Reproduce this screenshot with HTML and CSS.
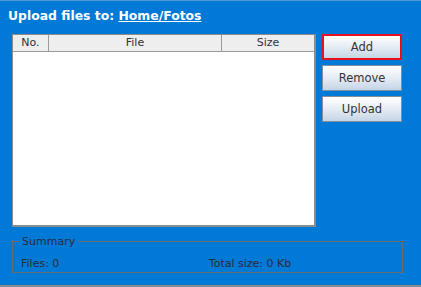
FILE: index.html
```html
<!DOCTYPE html>
<html lang="en">
<head>
    <meta charset="UTF-8">
    <title>Upload files</title>
    <link rel="stylesheet" href="styles.css">
</head>
<body>
    <div class="panel">
        <h1 class="title">Upload files to: <a href="#">Home/Fotos</a></h1>

        <div class="main">
            <div class="file-table">
                <div class="head">
                    <div class="col col-no">No.</div>
                    <div class="col col-file">File</div>
                    <div class="col col-size">Size</div>
                </div>
                <div class="rows"></div>
            </div>

            <div class="buttons">
                <button class="btn btn-focus">Add</button>
                <button class="btn">Remove</button>
                <button class="btn">Upload</button>
            </div>
        </div>

        <div class="summary">
            <span class="legend">Summary</span>
            <span class="files">Files: 0</span>
            <span class="total">Total size: 0 Kb</span>
        </div>
    </div>
</body>
</html>
```

FILE: styles.css
```css
body {
    margin: 0;
    background: #0179d6;
    font-family: "DejaVu Sans", sans-serif;
}

.panel {
    height: 287px;
    border-top: 1px solid #4f9ad6;
    border-bottom: 2px solid #8a8a8a;
    box-sizing: border-box;
    padding: 0 0 0 12px;
}

.title {
    margin: 0 0 0 -4px;
    height: 33px;
    padding-top: 7px;
    box-sizing: border-box;
    font-size: 12.4px;
    font-weight: bold;
    color: #fff;
}

.title a {
    color: #fff;
}

.main {
    display: flex;
    align-items: flex-start;
}

.file-table {
    width: 304px;
    height: 193px;
    box-sizing: border-box;
    border: 1px solid #8c8c8c;
    border-right-width: 2px;
    border-bottom-width: 2px;
    background: #fff;
}

.head {
    display: flex;
    height: 16px;
    background: #eeeeee;
    border-bottom: 1px solid #9a9a9a;
    font-size: 11px;
    color: #333;
}

.col {
    text-align: center;
    line-height: 16px;
    border-right: 1px solid #9a9a9a;
    box-sizing: border-box;
}

.col-no { width: 36px; }
.col-file { width: 173px; }
.col-size { flex: 1; border-right: none; }

.buttons {
    display: flex;
    flex-direction: column;
    gap: 5px;
    margin-left: 6px;
}

.btn {
    width: 80px;
    height: 26px;
    border: 1px solid #7f8fa0;
    background: linear-gradient(#ffffff, #e8eef5 45%, #c5d5e6);
    font-family: "DejaVu Sans", sans-serif;
    font-size: 11.5px;
    color: #333;
    padding: 0;
}

.btn-focus {
    border: 2px solid #e8101c;
}

.summary {
    position: relative;
    margin-top: 14px;
    width: 391px;
    height: 32px;
    box-sizing: border-box;
    border: 1px solid #6b6b6b;
    padding: 15px 0 0 8px;
    font-size: 11px;
    line-height: 13px;
    color: #2b2b3a;
}

.legend {
    position: absolute;
    top: -7px;
    left: 6px;
    padding: 0 3px;
    background: #0179d6;
}

.total {
    margin-left: 146px;
}
```
